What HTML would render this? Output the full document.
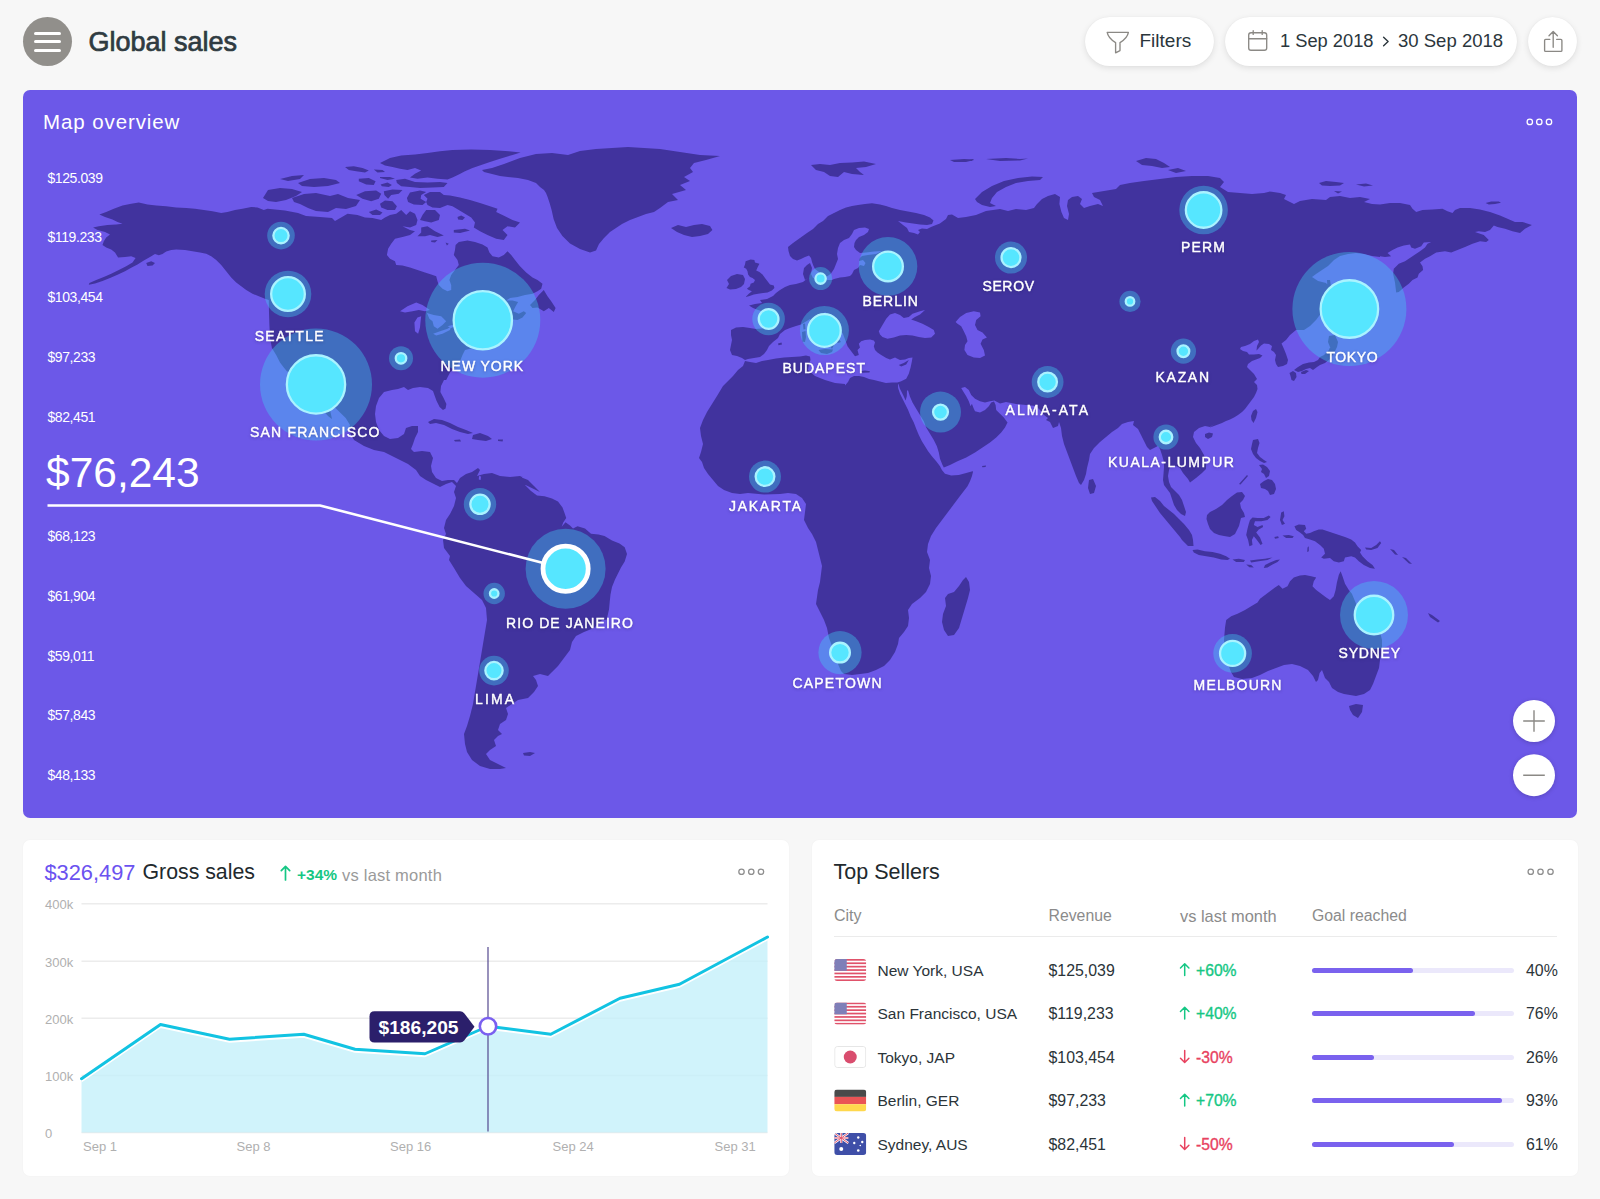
<!DOCTYPE html>
<html lang="en">
<head>
<meta charset="utf-8">
<title>Global sales</title>
<style>
*{box-sizing:border-box;margin:0;padding:0}
html,body{width:1600px;height:1199px;overflow:hidden;background:#f7f7f7}
body{font-family:"Liberation Sans",sans-serif;color:#2b363c;position:relative}
.abs{position:absolute;white-space:nowrap;line-height:1}
.pill{position:absolute;background:#fff;border-radius:25px;box-shadow:0 2px 6px rgba(0,0,0,.10),0 0 1px rgba(0,0,0,.08)}
#menu{left:23px;top:17px;width:49px;height:49px;border-radius:50%;background:#918f8b}
#menu i{position:absolute;left:11px;width:27px;height:3px;border-radius:1.5px;background:#fff}
#title{left:88.500px;top:29px;font-size:27px;font-weight:400;color:#2f3b41;-webkit-text-stroke:.7px #2f3b41}
#mapcard{position:absolute;left:23px;top:90px;width:1554px;height:728px;border-radius:7px;background:#6c58e8;overflow:hidden}
#mapsvg{position:absolute;left:0;top:0}
.card{position:absolute;background:#fff;border-radius:7px;box-shadow:0 0 2px rgba(0,0,0,.04)}
.yl{font-size:14px;color:#fff;left:47.500px;letter-spacing:-.42px}
.city{font-size:14px;font-weight:700;fill:#fff;letter-spacing:1.4px}
.th{font-size:16px;color:#8b8b8b}
.td{font-size:16px;color:#2b3439}
.up{color:#16c784}
.dn{color:#e8425f}
.bar{position:absolute;left:1312px;width:202px;height:5px;border-radius:3px;background:#ebe8fb}
.bar b{position:absolute;left:0;top:0;height:5px;border-radius:3px;background:#7a62ee}
.ax{font-size:13px;color:#b0b0b0}
</style>
</head>
<body>
<!-- header -->
<div class="abs" id="menu"><i style="top:14.5px"></i><i style="top:23px"></i><i style="top:31.5px"></i></div>
<div class="abs" id="title">Global sales</div>

<div class="pill" style="left:1085px;top:17px;width:129px;height:49px"></div>
<div class="pill" style="left:1225px;top:17px;width:292px;height:49px"></div>
<div class="pill" style="left:1528px;top:17px;width:49px;height:49px"></div>
<div class="abs" style="left:1139.5px;top:31px;font-size:19px;color:#2b363c">Filters</div>
<div class="abs" style="left:1280px;top:31.5px;font-size:18.3px;color:#2b363c">1 Sep 2018</div>
<div class="abs" style="left:1398px;top:31.5px;font-size:18.55px;color:#2b363c">30 Sep 2018</div>
<svg class="abs" style="left:1085px;top:17px" width="500" height="49" viewBox="1085 17 500 49" fill="none" stroke="#8b8985" stroke-width="1.5" stroke-linejoin="round" stroke-linecap="round">
  <path d="M1107.200 32.400H1128.400Q1127.400 38.200 1120 42.600V50.600L1115.600 52.800V42.600Q1108.200 38.200 1107.200 32.400Z" stroke-width="1.350"/>
  <rect x="1248.700" y="32.700" width="18" height="17.500" rx="2.300" stroke-width="1.350"/><path d="M1248.700 38.700h18M1253.200 30.700v3.700M1262.200 30.700v3.700" stroke-width="1.350"/>
  <path d="M1383.6 37.200l4.500 4.300-4.500 4.300" stroke="#2b363c" stroke-width="1.400"/>
  <path d="M1549.800 39.400h-4.200q-1 0-1 1v10q0 1 1 1h15.300q1 0 1-1v-10q0-1-1-1h-4.200M1553.200 47.300v-15.600M1549 35.800l4.200-4.300 4.200 4.300" stroke-width="1.350"/>
</svg>

<!-- map card -->
<div id="mapcard">
<svg id="mapsvg" width="1554" height="728" viewBox="23 90 1554 728">
<g id="land"><path fill="#41339e" d="M380 163.1L390 158.1L401.2 155.6L415 154.4L427.5 153.1L440 151.2L452.5 150L471.2 149.4L490 150L508.8 151.2L520.6 152.5L512.5 155L500 158.8L490 161.9L481.2 165L472.5 168.1L465 171.2L458.8 174.4L452.5 177.5L447.5 179.4L437.5 178.8L427.5 177.5L417.5 178.8L410 177.5L415 173.8L421.2 170.6L415 168.1L407.5 170L400 168.8L392.5 166.9L385 165.6ZM396.2 180L405 178.8L415 181.9L427.5 182.5L440 181.9L447.5 183.1L443.8 186.9L432.5 187.5L420 188.1L410 186.9L401.2 186.2L396.9 183.1ZM345 166.9L353.8 166.2L362.5 168.1L368.8 170.6L365 172.5L356.2 171.2L348.8 170ZM373.8 169.4L382.5 170L385 171.9L377.5 172.5ZM358.8 178.8L368.8 178.1L375.6 181.2L373.8 185L366.2 184.4L358.8 181.2ZM380 176.9L390 176.9L395 178.8L387.5 180L380 178.1ZM380.6 184.4L387.5 182.5L391.9 185L388.8 186.9L381.9 186.2ZM356.2 195L365 191.2L376.2 190.6L381.2 193.8L378.8 198.8L371.2 201.2L362.5 198.8ZM383.8 191.2L392.5 189.4L402.5 190L398.8 193.8L391.2 195L388.1 198.8L384.4 195ZM380 203.8L385 200.6L392.5 201.2L396.9 206.2L395 210L387.5 210L381.2 207.5ZM368.8 211.9L376.2 209.4L382.5 212.5L380 215L372.5 215ZM406.9 198.1L410 192.5L420 190.6L426.2 191.9L421.2 195L420.6 198.8L426.2 201.9L422.5 205L413.8 204.4L408.1 201.9ZM423.8 195L430 191.9L440 191.9L443.8 195L450 195.6L460 197.5L470 200L480 203.1L490 206.2L497.5 208.8L496.2 211.9L505 216.2L512.5 220L520 222.5L515 227.5L507.5 226.2L502.5 230L507.5 235L503.8 240L496.2 238.8L487.5 235L480 231.2L473.8 227.5L475 222.5L471.2 217.5L465 213.8L458.8 210L452.5 206.2L447.5 205L440 208.1L432.5 207.5L427.5 205L426.2 201.9L427.5 198.8ZM426.2 210L435 210L440 215L438.8 220L431.2 222.5L425 221.2L420 220L422.5 215ZM421.2 227.5L427.5 226.2L435 231.2L443.8 235.6L437.5 236.9L430 235L425 236.2L417.5 236.2L421.2 232.5ZM457.5 216.9L461.2 215.6L465 217.5L462.5 220L458.1 219.4ZM453.8 230L465 228.8L470 230.6L460 233.1L453.8 232.5ZM431.2 240.6L437.5 240L435 242.5L431.2 241.9ZM445.6 242.5L448.8 243.8L446.9 245.6ZM99.4 214.4L106.2 211.9L113.8 208.8L122.5 205.6L131.2 203.8L138.8 202.5L147.5 204.4L156.2 205.6L166.2 206.2L176.2 207.5L186.2 208.1L195 208.8L203.8 210L212.5 211.2L221.2 213.1L227.5 211.9L235 210L242.5 208.8L251.2 206.9L257.5 207.5L263.8 210L267.5 208.8L275 209.4L284.9 210.6L298 213L306 216L320 217L332 218L335 221L342 217L347.5 213.8L357.5 215L365 217.5L372.5 218.1L381.2 220L385 217.5L390 215L396.2 213.8L401.2 210L406.2 215L410 211.2L415 213.8L417.5 220L416.2 225L410 227.5L402.5 226.2L410 230L415 231.2L410 235L402.5 236.9L395 238.8L391.2 243.8L388.1 248.8L386.9 255L390 258.8L395 261.2L396.2 265L402.5 265.6L410 267.5L417.5 270L425 272.5L431.2 274.4L436.2 276.2L437.5 281.2L438.8 285L442.5 288.8L447.5 291.2L451.2 290L451.2 285L449.4 280L451.2 275L455 270L458.8 265L457.5 260L453.8 255L455 250L455.6 245L458.8 241.9L467.5 240.6L475 241.9L482.5 244.4L487.5 247.5L489.4 252.5L492.5 256.2L498.8 257.5L503.8 255L507.5 251.2L511.2 255L515 260L520 266.2L526.2 272.5L532.5 277.5L537.5 280L542.5 283.8L541.2 288.8L537.5 291.2L532.5 293.8L525 295L517.5 296.9L510 298.1L506.2 300.6L512.5 300.6L518.1 301.9L515.6 306.2L513.1 311.2L518.8 313.8L523.8 311.2L526.2 313.1L522.5 317.5L517.5 320L513.1 319.4L510 321.2L500 330L487.5 340L475 347.5L465 350L462.5 355L460 361.2L455 367.5L450 372.5L446.2 379.9L444 380L441 386L440.4 392L443.6 398L446.4 404L445.6 408.4L443 410L439.6 407L436.6 401L434.4 395L433 391L428 388L420 387L413 388L408 390L404 387L398 389L392 390L384 392L379 398L376 406L375 414L376 422L379 430L384 436L390 439L398 438L404 434L406 428L412 426L418 426L418 432L415 438L413 444L411 449L414 452L422 451L430 452L433 458L431 466L432 472L436 478L442 481L448 480L454 480L457 483L460 478L466 474L472 472L478 468L480 470L477 476L484 474L492 473L500 476L510 477L520 476L523 478L528 480L534 486L540 492L510 477.5L519 480.5L525 485L531 491L537 495.5L544.5 496.2L552 498.5L558 501.5L562.5 507.5L564.7 513.5L566.2 518L563.2 522.5L561.7 526.7L565.5 522.2L570 525.5L573 528.5L577.5 526.2L585 528.5L591 533.7L598.5 534.5L604.5 536L612 540.5L619.5 543.5L624.7 547.2L627 554L624.7 561.5L621 567.5L618 573.5L615 579.5L612 587L610.5 594.5L609.7 602L609 609.5L606.7 619.8L602 620L594 628L584 632L576 636L572 642L570 650L564 658L558 666L552 672L548 676L540 674L533 676L536 680L538 686L534 692L528 698L518 700L512 704L506 708L508 714L506 720L500 724L498 730L502 734L498 736L494 740L496 746L490 750L486 754L490 760L498 764L506 768L500 769L490 769L480 766L472 760L467 752L465 744L464 734L467 726L470 716L473 704L475 692L477 680L479 668L481 656L483 644L485 632L487 620L486 608L482 600L474 593L466 586L460 578L454 568L449 560L450 556L444 548L443 540L446 534L444 528L446 520L450 514L454 506L456 498L454 492L456 486L452 482L446 484L440 487L434 484L426 480L420 476L416 470L408 464L400 460L392 456L384 452L374 450L364 446L354 440L348.5 430L350 425L345.7 418L335.5 408L332.5 404L330 410L332 419L328 416L322 409L316 398L310 388L303 378L286.9 371.2L283.8 367.5L280 362.5L276.2 355L271.9 348.1L270 337.5L269.4 325L269 312.5L268.8 300L265 298.8L258.8 296.2L252.5 293.8L246.2 290L241.2 286.2L236.2 282.5L231.2 277.5L226.2 271.2L221.2 265L216.2 260L211.2 256.2L206.2 253.8L200 252.5L192.5 251.2L185 250L176.2 249.4L171.2 250L166.2 251.5L162.5 254L158.8 255.2L155 254L150 256.9L143.8 260.6L137.5 264.4L131.2 267.8L125 271.2L117.5 274.8L110 278.1L102.5 281L95 283.5L88.8 284.8L89.4 283.1L96.2 280L103.8 276.9L111.2 273.8L118.8 270L126.2 266.2L132.5 262.5L135.6 258.1L131.2 256.2L125 256.9L118.1 257.5L115 252.5L111.2 249.4L106.2 247.5L102.5 245L103.8 241.2L106.2 237.5L110 234.4L105 231.9L97.5 230L93.1 227.5L98.8 226.2L107.5 225L116.2 224.4L122.5 223.8L117.5 221.9L112.5 219.4L105 216.9ZM146.2 263.1L151.2 261.2L155 263.1L152.5 265.6L147.5 266ZM263 198L268 190L280 188L292 189L302 192L296 196L286 200L276 202L268 201ZM292 198L304 194L316 193L330 196L338 194L348 198L360 200L356 206L346 209L336 208L328 212L316 211L308 208L300 204L294 202ZM280 179L292 176L304 175L300 179L288 181ZM298 183L310 179L324 178L336 180L340 183L328 186L314 187L302 186ZM530 305L535 300L538.8 295L543.8 290L547.5 296.2L551.2 301.2L555.6 308.1L553.8 311.9L548.8 308.1L543.8 311.2L537.5 307.5L532.5 308.1ZM428 422L434 419L442 420L450 423L458 427L466 430L473 433L468 434L460 432L452 429L444 425L436 423L430 424ZM473 435L480 433L488 436L492 439L486 441L478 440L472 439ZM454 440L460 439.4L461 441.4L455 441.6ZM498 439.4L503 439.4L502.6 441.4L498 441ZM519.6 477L522.4 476.8L522 479L519.6 478.8ZM523 753L530 752L535 753L530 756L524 755.6ZM788 247L793 243L800 238L807 233L813 229L818 224L823 221L828 216L834 213L840 210L846 207.5L852 206L858 205L865 204L872 203.2L880 204.5L886 206L892 208L900 210L908 211.5L916 213L924 215L930 217.5L933.5 220.5L932 224L927 225L920 224.5L913 223.5L906 222.5L898 221L903 225L907 228L909 232L914 233L918 234.5L920 232L918 230L922 228.5L927 229L931 227L936 225L939.9 223.5L946 219L948 215L952 214.4L958 218L966 217L976 215L986 211L1000 209L1008 211L1016 209L1026 210L1034 208L1037 204L1042 199L1048 196L1055 194L1060 197L1059.4 204L1061.4 212L1064 218L1068 220L1069 214L1067 206L1068 200L1072 197L1078 196L1082 199L1080 204L1084 208L1090 206L1098 204L1103 206L1100 200L1094 197L1092 193L1104 191L1116 189L1120 185L1130 183L1144 181L1160 179L1176 177L1192 176L1208 176L1220 178L1224 182L1220 187L1228 192L1240 193L1252 194L1264 193L1270 191.6L1280 193L1286 195L1284 199L1294 204L1300 201L1312 199L1326 200L1330 197L1340 196L1350 198L1360 197L1370 199L1364 202L1372 204L1380 204.4L1390 203.1L1400 203.1L1410 205L1412.5 208.8L1416.2 211.9L1422.5 210L1432.5 209.4L1442.5 208.8L1447.5 211.2L1452.5 213.1L1455 210L1460 208.1L1470 208.1L1480 209.4L1490 211.9L1500 215.6L1507.5 218.8L1515 221.9L1522.5 221.9L1531.9 225L1525 228.8L1520 233.1L1512.5 231.2L1505 228.8L1497.5 226.9L1493.8 225.6L1490 230L1485 231.9L1478.8 231.2L1475 231.9L1483.8 235L1488.8 240L1486.2 241.9L1480 241.2L1472.5 243.8L1465 246.9L1457.5 250L1451.2 252.5L1445 251.2L1436.2 252.5L1430 256.2L1425 258.8L1420 262.5L1422.5 266.2L1423.1 270L1418.8 273.8L1417.5 277.5L1412.5 280L1408.8 283.8L1403.8 287.5L1398.8 291.9L1396.2 292.5L1395 282.5L1393.1 273.8L1393.8 268.8L1398.8 263.8L1405 261.2L1412.5 256.2L1420 251.2L1425 247.5L1427.5 243.8L1431.2 241.9L1423.8 242.5L1421.2 246.2L1415 248.8L1411.2 247.5L1410 244.4L1403.8 245.6L1397.5 247.5L1392.5 250L1387.5 253.1L1391.2 256.2L1385 256.9L1380 256.2L1380 257L1372 256L1364 254L1356 253L1348 254L1340 256L1334 260L1328 266L1322 270L1316 274L1312 277L1318 281L1326 283L1330 288L1328 300L1322 312L1316 320L1310 326L1304 330L1296 330L1290 335L1286 340L1281.5 343.5L1284 349L1286 354L1288 360L1287 364L1283 366L1278 367L1276 364L1275 360L1276 355L1274 352L1271 350L1272 346L1269 344L1264 343.5L1261 345.5L1258 349L1256.5 350.5L1257 346L1259 342L1258 339.5L1254 341L1250 344L1245 346L1241 347L1240 349L1243 351L1247 352L1249 354.5L1254 354.5L1259 354L1262.5 355.5L1260 358L1256 359.5L1252 361L1248 364L1247 367L1250 370L1254 374L1257 379L1254 382L1257 385L1257.5 389L1256 393L1254 397L1251 401L1248 405L1245 409L1242 412L1238 415L1234 417.5L1230 419.5L1226 421L1222 423L1218 424.5L1214 426L1210 427.5L1214 424L1210 427L1205 426L1199 428L1194 432L1193 437L1196 443L1200 448L1204 455L1206 463L1206 469L1202 473L1196 478L1190 482.5L1188 479L1183 473L1180 468L1176 466L1170 467L1169 470L1168 476L1169 482L1171 487L1175 491L1179 495L1182 500L1184 506L1186 512L1185 516L1181 514L1177 510L1174 505L1172 499L1170 493L1167 489L1164 485L1163 480L1163.5 474L1164 467L1164 462L1162 455L1160 449L1158 446L1154 448L1150 450L1147 447L1144 441L1141 435L1138 429L1133 425L1134 421L1128 422L1122 424L1118 428L1112 432L1106 437L1100 442L1094 448L1090 454L1089 460L1087 468L1086 474L1084 480L1081 485L1079 483L1076 476L1073 468L1070 460L1067 452L1064 444L1062 436L1061 428L1059 422L1058 426L1053 428L1050 422L1046 420L1048 418L1044 415L1040 410L1036 406L1026 405L1016 404L1006 402L1000 403.6L994.4 400.6L990 401.2L985 402.5L980 401.2L975 398.8L971.2 395L968.8 390L965 386.9L961.2 388.1L963.1 391.2L966.2 396.2L968.8 401.2L970.6 406.2L971.9 403.8L973.5 408.1L975 411.2L980 412.5L985 410L988.8 406.2L991.2 402.5L994 401.5L995.6 405L996.2 410L1000 413.8L1003.8 417.5L1007.5 422.5L1005 427.5L1001.2 432.5L996.2 437.5L990 442.5L982.5 447.5L975 452.5L966.2 457.5L957.5 461.2L950 465L943.8 467.5L942.5 465L940 458.8L938.8 452.5L936.9 446.2L933.8 440L930 433.8L926.2 427.5L923.8 421.2L920 415L916.2 408.8L912.5 402.5L909.8 396.2L908.1 390.6L907 390.4L906.8 396.2L905.6 400.6L903.1 395L899.8 388.5L898.8 385L897.5 382.5L901.2 381.2L906.2 378.8L908.8 373.8L910.6 367.5L911.9 361.2L912.5 357.5L908.8 358.1L905 359.4L900 360L895 357.5L890 359.4L886.2 358.1L881.2 355L877.5 352.5L875 350L873.8 346.2L875 342.5L873.8 340.6L870 339.4L865 340L861.2 341.2L858.8 343.8L860 347.5L857.5 350L858.8 355L855 356.2L851.2 351.2L847.5 346.2L846 342L843 334L839 328L834 322L829 316L825 312L823 315L825 320L829 326L833 332L838 338L841 342L838 343L835 341L834 345L832 349L830 346L828 340L824 335L819 330L814 324L810 319L801 324.5L796 326L790 328L785 330L780 334L778 338L773 342L769 346L767 350L764 354L760 357L754 358L748 359L745 360L742 358L737 356L732 355L730 350L731 345L732 340L731 335L731 330L736 327.5L743 327L750 328L756 329L762 328.5L767 328L767.5 322L766.5 317L764 313L760 310.5L758 310L753 308L749 305.5L755 304L762 303L760 300L767 299L773 296L776 293L780 290L785 287L790 285L796 284L803 282L808 278L805 280L803 274L804 268L807 265L810 263L812 268L811 274L813 278L820 280L832 280L834 279L840 277.5L845 277L850 276L852 274L854 270L858 268L860 265L864 266L865.5 263L863 260L859 261L860 258L862 256L868 255L876 254L882 251L874 251.5L866 252.5L860 253L856 250L854 247L854.5 243L856 240L859 237L864 235L868 232L869 229L865 227.5L859 228L854 230L852 234L849 238L844 240L840 243L838 248L837 254L838 259L836 264L834 269L831 273.5L827 276.5L823 275L819 272L815 269L813.5 266L812 262L811 258L809 255.5L805 257L801 259L797 260.5L793 259L790 256L788.5 251ZM745.6 261.2L750.6 259.4L754.4 260L755 262.5L759.4 263.8L757.5 267.5L756.2 270.6L759.4 271.9L762.5 274.4L765 278.1L767.5 281.2L770 284.4L773.8 285.6L774.4 288.1L771.9 290.6L767.5 292.5L763.1 293.1L758.1 293.8L753.8 294.4L748.8 296.2L745.6 296.9L748.8 293.8L751.9 291.2L748.8 290L746.9 288.8L750 286.2L750.6 283.8L753.8 282.5L755 280L752.5 278.1L750 276.9L748.1 274.4L747.5 271.2L746.2 268.8L743.8 267.5L745 264.4ZM727 280L731 276L737 274L743 275L745 279L744 284L741 287L736 289L730 289.5L726.5 288L729 284ZM671 228L678 225L686 227L694 225L702 224L710 226L712.4 230L708 234L700 236L692 237L684 235L677 232ZM811 165L820 164L830 165L840 163L852 162.4L864 161.6L876 164L866 167L856 168L860 172L864 175L852 174L844 172L838 177L830 176L824 172L816 170ZM950 160L964 159L974 160L966 162L954 162ZM818.5 350L825 349L833 349.5L832 352L827 354L821 353ZM802 332L805.5 331L806 337L805 342L802.5 341.5ZM803 324L805 323.5L805.5 329L803.5 329.5ZM778 343.5L781.5 342.5L782 344.5L778.5 345.2ZM898.8 365L903.8 363.1L908.8 360L906.2 364.4L901.2 366.5ZM860 371.2L865 370.6L870 371.2L869.4 372.5L862.5 372.8ZM975 199L982 192L992 186L1004 181L1018 178L1032 176.6L1043 177L1040 180L1028 181L1016 183L1006 187L997 192L992 198L990 203L996 206L990 207L982 205L977 202ZM1136 161L1146 158L1156 159L1164 163L1170 167L1162 168L1152 166L1142 165ZM1168 170L1178 168L1186 171L1176 173ZM986 159L1006 158L1020 159L1028 158.4L1020 160.4L1000 161ZM964 159.6L974 159L972 161ZM1485.6 203.1L1491.2 201.5L1498.8 201.5L1501 202.8L1495 204L1488.8 204.4ZM1319 183L1326 181L1336 182L1344 183L1340 185.6L1330 186L1322 185.6ZM1356 184.4L1366 183.6L1373 185.6L1364 186.4ZM1334 191L1342 191.6L1338 193.6ZM1329 336L1335 335L1338 342L1335 349L1330.4 348L1328 342ZM1327 280L1330 280L1332.4 296L1334.4 312L1333.6 332L1331 332L1330 312L1328 296ZM1289.5 373L1293 371L1296 373L1296.5 377L1294 381L1291.5 380L1290.5 376ZM1294 370L1298 367L1303 364L1309 362.5L1314 362L1318 360L1320 357L1324 355L1329 350L1331 344L1333 338L1335 336L1338 342L1337 347L1334 353L1330 359L1325 363L1320 365L1317 367L1313 370L1310 368L1306 369L1302 371L1298 372ZM1301 372L1306 370L1309 371L1305 374L1301.5 374ZM1251 416L1253 411L1256 409L1257.5 412L1256 418L1253.5 423L1251.5 420ZM733 376L738 370L743 366L745 361L750 362L756 363L762 361L768 360L776 358.5L784 357.5L792 357L800 356.5L806 355.5L810 356.5L810.5 360L809 364L808 370L815 376L825 380L835 383L845 384L845 385.5L848 382L850 378L854 376L859 376L864 377L869 379L874 380L880 381.5L886 383L892 382.5L898 382.5L898.1 388.1L900 393.8L902.5 398.8L905 403.8L908.1 410L910.6 416.2L913.8 422.5L916.2 428.8L918.8 435L921.9 441.2L925 446.2L928.1 451.2L931.9 456.2L936.2 461.2L940 466.2L941.9 470L945 473.8L951.2 475.6L958.8 475L966.2 473.1L972.5 471.2L973.1 471.5L971.9 476.2L970 481.2L967.5 486.2L960 496L954 504L948 512L942 520L936 528L931 536L928 544L927 552L930 560L929 568L931 576L930 584L926 592L920 598L912 604L908 610L909 618L908 626L904 632L899 638L898 644L895 652L890 660L884 666L876 670L868 673L860 674L852 675L844 674L841 671L838 664L832 646L829 638L827 628L824 620L820 612L816 604L818 590L820 582L821 574L822 566L820 558L818 550L816 542L812 534L808 528L804 520L805 512L806 504L802 498L796 494L788 493L780 494L764 494.4L748 493L740 494L732 493L724 490L718 486L713 480L708 474L704 468L702 462L699 458L701 452L703 444L701 436L700 428L703 420L707 412L712 404L717 396L723 386ZM966 577L969 582L970 590L968 598L965 608L962 618L959 628L954 635L948 636L944 630L942 622L943 614L946 606L945 598L948 594L954 592L959 586L963 580ZM982 466L986 465.4L985.6 467L982.4 467.2ZM660 208L654 212L646 214L638 217L630 220L622 224L616 228L610 232L604 238L599 244L596 250.4L590 252.6L580 249L570 243.6L562.4 236L557 228L553.6 219L551.6 210L549.6 203L547.6 197L546 193L544 190L540 187L536 183L528 180L518 178L508 177L500 176L492 174L484 172L482 170L492 168L504 164L520 158L536 154L552 153L568 155L580 151L596 149L612 148L628 147L644 148L660 149L680 152L700 155L720 156L706 160L694 163L690 168L693 172L684 177L690 181L680 185L686 190L672 194L678 200L668 202L660 208ZM1089 480L1093 479L1096 486L1094 493L1090 494L1088 488ZM1205 434L1209 432.5L1213 433.5L1212 437L1208 439L1205 437ZM1151 497.5L1155 497L1160 501L1164 506L1169 510L1174 514L1179 519L1184 524L1189 530L1192 535L1193 539.9L1193.5 546L1188 546L1182 539.9L1180 537L1175 531L1170 525L1165 519L1160 513L1156 507L1152 501ZM1207 515L1210 512L1216 509L1222 505L1227 500L1232 496L1237 492.5L1242 492L1245 496L1243 500L1240 503L1241 508L1244 513L1245 517L1241 518L1240 522L1239 526L1237 530L1235 534L1230 537L1224 536L1219 535L1214 533L1210 529L1208 524L1206.5 519ZM1253 440L1258 439L1259.5 443L1258 448L1257 453L1260 457L1264 460L1267 462L1264 463L1260 461L1256 458L1253 454L1251 449L1252 444ZM1260 484L1264 481L1268 479L1272 480L1275 484L1276 489L1274 494L1270 495L1268 491L1265 489L1261 488ZM1259 465L1263 464.5L1267 467L1270 471L1269 476L1266 478L1264 474L1261 472L1262 469ZM1239 484L1247 475L1248 476L1240.5 484.5ZM1390 549L1394 550L1398 555L1395 554.4ZM1402 557L1406 558L1412 564L1409 563.6ZM1225 627.5L1226.2 620L1231.2 616.2L1237.5 613.8L1245 610L1251.2 606.2L1257.5 602.5L1260 598.8L1265 595L1270 591.2L1275 587.5L1278.8 585L1282.5 588.8L1287.5 586.2L1290 581.2L1293.8 577.5L1300 575.6L1305 575L1311.2 576.2L1316.2 577.5L1313.8 581.2L1312.5 586.2L1316.2 590L1321.2 593.8L1326.2 597.5L1330 600L1333.8 596.2L1335.6 590L1336.9 582.5L1338.8 575L1340.6 571.2L1342.5 576.2L1345 583.8L1348.8 590L1351.9 593.8L1357 606L1364 614L1372 624L1380 632L1382 640L1382 650L1380 660L1379 668L1376 676L1373 684L1370 690L1364 694L1356 696L1350 695L1344 694L1338 692L1332 688L1329 682L1325 678L1322 670L1319.6 673L1318 680L1316 682L1313 676L1308 670L1300 666L1292 664L1284 665L1276 668L1268 671L1260 675L1252 678L1242 679L1234 677L1231 672L1228 664L1225 654L1224 640ZM1349 706L1356 704L1363 705L1362 712L1358 718L1353 715L1350 710ZM1428 613L1432 615L1440 621L1438 622.4L1430 617ZM1192.5 550L1197.5 549.4L1205 551.2L1212.5 551.9L1220 553.8L1226.2 556.2L1230 558.8L1227.5 560L1221.2 559.4L1213.8 557.5L1206.2 556.2L1198.8 555L1193.8 552.5ZM1232.5 559.4L1238.8 558.8L1245 560L1243.8 561.9L1236.2 561.9ZM1250 560.6L1257.5 559.4L1265 558.8L1272.5 557.5L1267.5 560L1258.8 561.2L1251.2 562.5ZM1246.2 564.4L1251.2 565L1253.8 567.5L1249.4 567.2ZM1265 565L1270 562.5L1276.2 560L1280 559.4L1277.5 561.9L1272.5 564.4L1267.5 567.5L1263.8 568.1ZM1250 520L1252.5 517.5L1257.5 518.1L1263.8 518.1L1268.8 515.6L1270.6 516.9L1267.5 520L1261.2 521.2L1255 521.2L1253.8 525L1257.5 526.9L1262.5 525L1263.1 526.9L1258.8 529.4L1256.2 532.5L1260 537.5L1262.5 543.8L1260.6 545L1256.9 540L1253.8 536.2L1251.9 540L1252.5 545L1249.4 546.2L1248.1 540L1246.2 535L1247.5 528.8L1248.8 523.8ZM1281.2 512.5L1283.8 511.2L1284.4 516.2L1282.5 520L1285 523.8L1281.9 525L1280 520L1280.6 516.2ZM1274.4 536.9L1278.1 536.2L1278.8 538.1L1275 538.8ZM1282.5 535.6L1288.8 535L1293.8 536.2L1292.5 538.1L1286.2 538.1ZM1294.4 526.2L1298.8 524.4L1305 525L1306.2 528.8L1303.8 531.2L1306.2 533.8L1310 533.1L1313.8 531.2L1318.8 529.4L1322.5 529.4L1330 531.9L1337.5 534.4L1345 536.9L1351.2 539.4L1355 542.5L1357.5 546.2L1361.2 550L1360 552.5L1362.5 556.2L1367.5 561.2L1372.5 565L1375 568.8L1370 568.1L1363.8 565L1358.8 561.2L1355 557.5L1351.2 556.2L1345 557.5L1343.8 561.2L1338.8 562.5L1333.8 561.2L1330 558.1L1323.8 558.8L1321.2 557.5L1325 553.8L1323.8 548.8L1320 545L1315 541.2L1310 539.4L1305 538.1L1303.1 535L1300 532.5L1296.2 530ZM1365 547.5L1371.2 548.1L1376.2 545L1379.9 541.2L1381.2 543.1L1377.5 548.1L1371.2 550L1366.2 549.4ZM1307.5 547.5L1308.8 546.2L1308.8 551.2L1307.2 551.9Z"/><path fill="#6c58e8" d="M400 311.2L407.5 306.2L416.2 302.5L422.5 305L430 310L425 311.2L418.8 310L412.5 311.2L405 312.5ZM414.4 322.5L417.5 317.5L421.2 316.2L420.6 321.2L420 327.5L418.1 333.8L415 331.2ZM426.9 313.1L433.8 315L441.2 316.2L446.2 321.2L442.5 325L437.5 328.8L433.8 326.2L432.5 321.2L429.4 318.8ZM433.1 333.8L440 331.2L447.5 328.8L451.2 326.2L450 330L442.5 333.8L436.2 335.6ZM447.5 326.2L452.5 325L455 326.2L451.2 328.1ZM479 476L481 476.4L480.6 480L478.8 479.6ZM878.8 331.2L882.5 325L886.2 318.8L890 314.4L895 313.1L900 315L903.8 318.1L908.8 316.9L912.5 313.8L920 311.2L925 310L920 314.4L915 316.9L911.2 319.4L916.2 321.2L922.5 323.8L928.8 326.9L933.8 330L935 333.8L931.2 337.5L925 338.1L918.8 336.9L912.5 335.6L906.2 335L900 335.6L893.8 337.5L887.5 338.8L882.5 336.9L880 334.4ZM955.6 321.9L960 316.9L966.2 313.1L973.8 311.2L980 312.5L980.6 316.2L976.2 320L975 325L977.5 330L982.5 332.5L986.9 337.5L982.5 339.4L980.6 343.8L983.8 350L985 355.6L980 358.1L973.8 357.5L967.5 355L964.4 350L965 345L967.5 341.2L966.2 336.2L963.8 331.2L961.2 326.2L957.5 323.8Z"/></g>
<g id="circles">
<g fill="#3fcff5" fill-opacity=".38"><circle cx="281" cy="235.6" r="13.8"/><circle cx="288" cy="294" r="23.3"/><circle cx="316" cy="384.4" r="56"/><circle cx="401" cy="358.3" r="12"/><circle cx="482.8" cy="320.2" r="57.5"/><circle cx="480" cy="504.3" r="16.2"/><circle cx="494.2" cy="593.5" r="10.7"/><circle cx="494" cy="670.6" r="14.8"/><circle cx="888" cy="266.4" r="29.3"/><circle cx="820.6" cy="278.6" r="11.5"/><circle cx="768.6" cy="319" r="16.3"/><circle cx="824.4" cy="330.5" r="24.5"/><circle cx="1203.6" cy="210" r="24.3"/><circle cx="1011" cy="257.6" r="16"/><circle cx="1130" cy="301.4" r="10.6"/><circle cx="1183.4" cy="351.2" r="12.6"/><circle cx="1047.6" cy="382" r="15.9"/><circle cx="1166" cy="437" r="12.6"/><circle cx="940.5" cy="412.1" r="20.5"/><circle cx="765" cy="476.6" r="16"/><circle cx="840" cy="652.6" r="21.6"/><circle cx="1349.4" cy="309" r="57"/><circle cx="1374" cy="615" r="34"/><circle cx="1232.6" cy="653.4" r="19.3"/><circle cx="565.6" cy="568.8" r="40"/></g>
<path d="M47.5 505.5H320L565.6 568.8" fill="none" stroke="#fff" stroke-width="2.6" stroke-linejoin="round"/>
<g fill="#56e6ff" stroke="#aaf3ff" stroke-width="2.300"><circle cx="281" cy="235.6" r="7.65"/><circle cx="288" cy="294" r="16.85"/><circle cx="316" cy="384.4" r="29.150000000000002"/><circle cx="401" cy="358.3" r="5.25"/><circle cx="482.8" cy="320.2" r="29.150000000000002"/><circle cx="480" cy="504.3" r="9.65"/><circle cx="494.2" cy="593.5" r="4.25"/><circle cx="494" cy="670.6" r="8.65"/><circle cx="888" cy="266.4" r="14.85"/><circle cx="820.6" cy="278.6" r="5.15"/><circle cx="768.6" cy="319" r="9.85"/><circle cx="824.4" cy="330.5" r="16.35"/><circle cx="1203.6" cy="210" r="17.75"/><circle cx="1011" cy="257.6" r="9.45"/><circle cx="1130" cy="301.4" r="4.25"/><circle cx="1183.4" cy="351.2" r="5.85"/><circle cx="1047.6" cy="382" r="9.35"/><circle cx="1166" cy="437" r="6.25"/><circle cx="940.5" cy="412.1" r="7.449999999999999"/><circle cx="765" cy="476.6" r="9.35"/><circle cx="840" cy="652.6" r="9.85"/><circle cx="1349.4" cy="309" r="28.75"/><circle cx="1374" cy="615" r="19.25"/><circle cx="1232.6" cy="653.4" r="12.549999999999999"/></g>
<circle cx="565.6" cy="568.8" r="22.6" fill="#56e6ff" stroke="#fff" stroke-width="4.8"/>
<g font-size="14" fill="#fff" stroke="#fff" stroke-width=".4" style="filter:drop-shadow(0 1px 1.5px rgba(30,20,90,.3))"><text x="254.75" y="341.0" style="letter-spacing:1.26px">SEATTLE</text><text x="250" y="437.0" style="letter-spacing:1.19px">SAN FRANCISCO</text><text x="440.6" y="370.6" style="letter-spacing:0.92px">NEW YORK</text><text x="506" y="627.6" style="letter-spacing:1.09px">RIO DE JANEIRO</text><text x="475" y="704.0" style="letter-spacing:2.10px">LIMA</text><text x="862.4" y="305.6" style="letter-spacing:1.00px">BERLIN</text><text x="782.4" y="372.6" style="letter-spacing:1.02px">BUDAPEST</text><text x="1181" y="251.6" style="letter-spacing:1.18px">PERM</text><text x="982.4" y="290.6" style="letter-spacing:0.65px">SEROV</text><text x="1155.6" y="381.6" style="letter-spacing:1.68px">KAZAN</text><text x="1005.6" y="415.0" style="letter-spacing:2.07px">ALMA-ATA</text><text x="1108" y="466.6" style="letter-spacing:1.48px">KUALA-LUMPUR</text><text x="729" y="511.0" style="letter-spacing:1.71px">JAKARTA</text><text x="792.4" y="687.6" style="letter-spacing:1.22px">CAPETOWN</text><text x="1326.4" y="361.6" style="letter-spacing:0.61px">TOKYO</text><text x="1338.6" y="658.0" style="letter-spacing:0.76px">SYDNEY</text><text x="1193.6" y="690.0" style="letter-spacing:1.21px">MELBOURN</text></g>
<g fill="none" stroke="#fff" stroke-width="1.3"><circle cx="1529.8" cy="121.9" r="2.7"/><circle cx="1539.3" cy="121.9" r="2.7"/><circle cx="1549" cy="121.9" r="2.7"/></g>
<g style="filter:drop-shadow(0 1px 2px rgba(0,0,0,.18))"><circle cx="1534" cy="721" r="21" fill="#fff"/><circle cx="1534" cy="775.2" r="21" fill="#fff"/></g>
<path d="M1523.2 721h21.6M1534 710.200v21.600M1523.200 775.200h21.600" stroke="#8b8985" stroke-width="1.400" fill="none"/>
</g>
</svg>
</div>
<div class="abs" style="left:43px;top:111.500px;font-size:20.500px;letter-spacing:.9px;color:#fff">Map overview</div>

<div class="abs yl" style="top:170.65px">$125.039</div>
<div class="abs yl" style="top:230.40px">$119.233</div>
<div class="abs yl" style="top:290.15px">$103,454</div>
<div class="abs yl" style="top:349.90px">$97,233</div>
<div class="abs yl" style="top:409.65px">$82,451</div>
<div class="abs yl" style="top:529.15px">$68,123</div>
<div class="abs yl" style="top:588.90px">$61,904</div>
<div class="abs yl" style="top:648.65px">$59,011</div>
<div class="abs yl" style="top:708.40px">$57,843</div>
<div class="abs yl" style="top:768.15px">$48,133</div>
<div class="abs" style="left:46px;top:452px;font-size:42.500px;color:#fff">$76,243</div>

<!-- bottom cards -->
<div class="card" style="left:23px;top:840px;width:766px;height:336px"></div>
<div class="card" style="left:812px;top:840px;width:766px;height:336px"></div>

<svg class="abs" style="left:23px;top:840px" width="766" height="336" viewBox="23 840 766 336">
<g stroke="#ececec" stroke-width="1.3" fill="none"><path d="M81.5 903.75H767.5"/><path d="M81.5 961.25H767.5"/><path d="M81.5 1018.25H767.5"/><path d="M81.5 1075.5H767.5"/><path d="M81.5 1132.5H767.5"/></g>
<polygon points="81.5,1078.75 160.5,1024.5 229.5,1039.25 303.75,1034.25 355,1049.25 425,1053.75 488,1026.25 550.75,1034.25 620,998.25 679.5,984.25 767.5,937 767.5,1132.5 81.5,1132.5" fill="#c4f0fa" fill-opacity=".8"/>
<polyline points="81.5,1078.75 160.5,1024.5 229.5,1039.25 303.75,1034.25 355,1049.25 425,1053.75 488,1026.25 550.75,1034.25 620,998.25 679.5,984.25 767.5,937" fill="none" stroke="#fff" stroke-width="2.500" transform="translate(0,2.2)" stroke-linejoin="round"/>
<polyline points="81.5,1078.75 160.5,1024.5 229.5,1039.25 303.75,1034.25 355,1049.25 425,1053.75 488,1026.25 550.75,1034.25 620,998.25 679.5,984.25 767.5,937" fill="none" stroke="#12c3e2" stroke-width="3" stroke-linejoin="round" stroke-linecap="round"/>
<path d="M488 947V1131.500" stroke="#54488f" stroke-width="1.200"/>
<circle cx="488" cy="1026.250" r="8.200" fill="#fff" stroke="#7a5ff0" stroke-width="2.600"/>
<path d="M374.500 1011.200h85.500q2.500 0 4.200 2l10.300 13.600-10.300 13.700q-1.700 2-4.200 2h-85.500q-5 0-5-5v-21.300q0-5 5-5z" fill="#2b1f6b"/>
<text x="378.500" y="1034" font-size="18.500" font-weight="700" fill="#fff" textLength="80" lengthAdjust="spacingAndGlyphs">$186,205</text>
<g fill="none" stroke="#8f8f8f" stroke-width="1.300"><circle cx="741.500" cy="871.750" r="2.700"/><circle cx="751.250" cy="871.750" r="2.700"/><circle cx="761" cy="871.750" r="2.700"/></g>
<path d="M285.500 880v-13M281.300 870.700l4.200-4.300 4.200 4.300" fill="none" stroke="#14c784" stroke-width="1.700" stroke-linecap="round" stroke-linejoin="round"/>
</svg>
<div class="abs" style="left:44.500px;top:861.500px;font-size:21.800px;color:#6b52f0">$326,497</div>
<div class="abs" style="left:142.500px;top:861.500px;font-size:21.300px;color:#22292d">Gross sales</div>
<div class="abs up" style="left:297px;top:867px;font-size:15.500px;font-weight:700">+34%</div>
<div class="abs" style="left:342px;top:866.500px;font-size:16.500px;letter-spacing:.22px;color:#9a9a9a">vs last month</div>
<div class="abs ax" style="left:45px;top:898.25px">400k</div>
<div class="abs ax" style="left:45px;top:955.75px">300k</div>
<div class="abs ax" style="left:45px;top:1012.75px">200k</div>
<div class="abs ax" style="left:45px;top:1070.00px">100k</div>
<div class="abs ax" style="left:45px;top:1127.00px">0</div>
<div class="abs ax" style="left:83px;top:1139.500px">Sep 1</div>
<div class="abs ax" style="left:236.5px;top:1139.500px">Sep 8</div>
<div class="abs ax" style="left:390px;top:1139.500px">Sep 16</div>
<div class="abs ax" style="left:552.5px;top:1139.500px">Sep 24</div>
<div class="abs ax" style="left:714.5px;top:1139.500px">Sep 31</div>

<div class="abs" style="left:833.500px;top:862px;font-size:21.500px;color:#22292d">Top Sellers</div>
<div class="abs th" style="left:834px;top:907.500px">City</div>
<div class="abs th" style="left:1048.500px;top:907.500px;font-size:15.800px">Revenue</div>
<div class="abs th" style="left:1180px;top:907.500px;font-size:16.400px">vs last month</div>
<div class="abs th" style="left:1312px;top:907.500px;font-size:15.800px">Goal reached</div>
<div class="abs" style="left:834px;top:936.200px;width:1422.500px;height:1.300px;background:#ebebeb;width:722.500px"></div>
<svg class="abs" style="left:812px;top:840px" width="766" height="336" viewBox="812 840 766 336">
<g fill="none" stroke="#8f8f8f" stroke-width="1.300"><circle cx="1530.750" cy="871.750" r="2.700"/><circle cx="1540.500" cy="871.750" r="2.700"/><circle cx="1550.500" cy="871.750" r="2.700"/></g>
<defs>
<clipPath id="fc"><rect x="0" y="0" width="32" height="22" rx="3"/></clipPath>
<g id="us" clip-path="url(#fc)"><rect width="32" height="22" fill="#fff"/><g fill="#e0526a"><rect y="0" width="32" height="1.700"/><rect y="3.400" width="32" height="1.700"/><rect y="6.800" width="32" height="1.700"/><rect y="10.200" width="32" height="1.700"/><rect y="13.600" width="32" height="1.700"/><rect y="17" width="32" height="1.700"/><rect y="20.400" width="32" height="1.700"/></g><rect width="12.500" height="11.800" fill="#7f7fb8"/></g>
<g id="jp" clip-path="url(#fc)"><rect width="32" height="22" fill="#fff"/><rect x=".5" y=".5" width="31" height="21" rx="2.500" fill="none" stroke="#e6e6e6"/><circle cx="16" cy="11" r="6.500" fill="#d94d6e"/></g>
<g id="de" clip-path="url(#fc)"><rect width="32" height="7.400" fill="#4a4a4a"/><rect y="7.400" width="32" height="7.300" fill="#ea5455"/><rect y="14.700" width="32" height="7.300" fill="#ffd84d"/></g>
<g id="au" clip-path="url(#fc)"><rect width="32" height="22" fill="#3f4fa8"/><g stroke="#fff" stroke-width="2.200"><path d="M0 0L14 10M14 0L0 10M7 0V10M0 5H14"/></g><g stroke="#e0526a" stroke-width="1"><path d="M0 0L14 10M14 0L0 10M7 0V10M0 5H14"/></g><g fill="#fff"><circle cx="7" cy="16" r="2"/><circle cx="24" cy="4.500" r="1.200"/><circle cx="28" cy="9" r="1.200"/><circle cx="20" cy="10" r="1.200"/><circle cx="24" cy="17.500" r="1.300"/><circle cx="26" cy="12.500" r=".8"/></g></g>
</defs>
<use href="#us" x="834.250" y="959.00"/>
<path d="M1184.7 975.5v-11.500M1180.5 968.0l4.200-4.300 4.200 4.300" fill="none" stroke="#14c784" stroke-width="1.500" stroke-linecap="round" stroke-linejoin="round"/>
<use href="#us" x="834.250" y="1002.50"/>
<path d="M1184.7 1019.0v-11.500M1180.5 1011.5l4.200-4.300 4.200 4.300" fill="none" stroke="#14c784" stroke-width="1.500" stroke-linecap="round" stroke-linejoin="round"/>
<use href="#jp" x="834.250" y="1046.00"/>
<path d="M1184.7 1050.5v11.500M1180.5 1058.2l4.200 4.300 4.200-4.300" fill="none" stroke="#e8425f" stroke-width="1.500" stroke-linecap="round" stroke-linejoin="round"/>
<use href="#de" x="834.250" y="1089.50"/>
<path d="M1184.7 1106.0v-11.500M1180.5 1098.5l4.200-4.300 4.200 4.300" fill="none" stroke="#14c784" stroke-width="1.500" stroke-linecap="round" stroke-linejoin="round"/>
<use href="#au" x="834.250" y="1133.00"/>
<path d="M1184.7 1137.5v11.500M1180.5 1145.2l4.200 4.300 4.200-4.300" fill="none" stroke="#e8425f" stroke-width="1.500" stroke-linecap="round" stroke-linejoin="round"/>
</svg>
<div class="abs td" style="left:877.500px;top:962.90px;font-size:15.500px">New York, USA</div><div class="abs td" style="left:1048.500px;top:962.90px;font-size:15.900px">$125,039</div><div class="abs up" style="left:1196px;top:962.90px;font-size:15.700px;-webkit-text-stroke:.35px">+60%</div><div class="bar" style="top:967.50px"><b style="width:101px"></b></div><div class="abs td" style="left:1526px;top:962.90px;font-size:15.900px">40%</div>
<div class="abs td" style="left:877.500px;top:1006.40px;font-size:15.500px">San Francisco, USA</div><div class="abs td" style="left:1048.500px;top:1006.40px;font-size:15.900px">$119,233</div><div class="abs up" style="left:1196px;top:1006.40px;font-size:15.700px;-webkit-text-stroke:.35px">+40%</div><div class="bar" style="top:1011.00px"><b style="width:163px"></b></div><div class="abs td" style="left:1526px;top:1006.40px;font-size:15.900px">76%</div>
<div class="abs td" style="left:877.500px;top:1049.90px;font-size:15.500px">Tokyo, JAP</div><div class="abs td" style="left:1048.500px;top:1049.90px;font-size:15.900px">$103,454</div><div class="abs dn" style="left:1196px;top:1049.90px;font-size:15.700px;-webkit-text-stroke:.35px">-30%</div><div class="bar" style="top:1054.50px"><b style="width:62px"></b></div><div class="abs td" style="left:1526px;top:1049.90px;font-size:15.900px">26%</div>
<div class="abs td" style="left:877.500px;top:1093.40px;font-size:15.500px">Berlin, GER</div><div class="abs td" style="left:1048.500px;top:1093.40px;font-size:15.900px">$97,233</div><div class="abs up" style="left:1196px;top:1093.40px;font-size:15.700px;-webkit-text-stroke:.35px">+70%</div><div class="bar" style="top:1098.00px"><b style="width:190px"></b></div><div class="abs td" style="left:1526px;top:1093.40px;font-size:15.900px">93%</div>
<div class="abs td" style="left:877.500px;top:1136.90px;font-size:15.500px">Sydney, AUS</div><div class="abs td" style="left:1048.500px;top:1136.90px;font-size:15.900px">$82,451</div><div class="abs dn" style="left:1196px;top:1136.90px;font-size:15.700px;-webkit-text-stroke:.35px">-50%</div><div class="bar" style="top:1141.50px"><b style="width:142px"></b></div><div class="abs td" style="left:1526px;top:1136.90px;font-size:15.900px">61%</div>
</body>
</html>
